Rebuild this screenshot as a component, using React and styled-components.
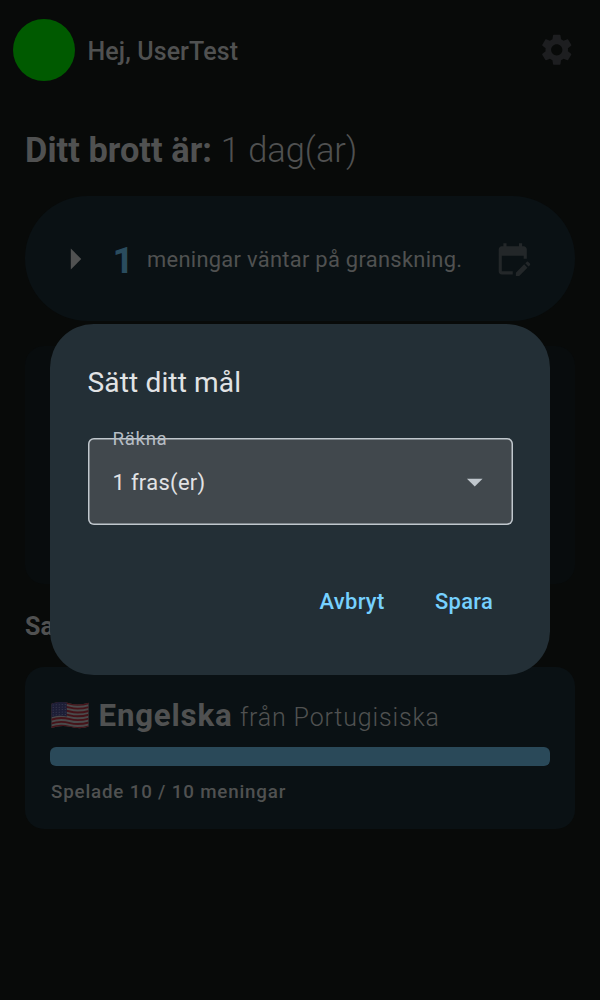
import React from 'react';
import styled, { createGlobalStyle } from 'styled-components';
import { MdSettings, MdEditCalendar, MdArrowRight, MdArrowDropDown } from 'react-icons/md';

const GlobalStyle = createGlobalStyle`
  * { box-sizing: border-box; }
  body { margin: 0; background: #080a09; font-family: Roboto, sans-serif; }
  svg { display: block; flex: none; }
`;

const Screen = styled.div`
  position: relative;
  width: 600px;
  height: 1000px;
  overflow: hidden;
  background: #080a09;
  color: #505151;
`;

const Header = styled.header`
  display: flex;
  align-items: center;
  height: 100px;
  padding: 0 25px 0 12.5px;
`;

const Avatar = styled.div`
  width: 62.5px;
  height: 62.5px;
  margin-right: 12.5px;
  border-radius: 50%;
  background: #005a00;
`;

const Greeting = styled.div`
  flex: 1;
  padding-top: 2px;
  font-size: 25px;
  font-weight: 500;
  line-height: 37px;
  letter-spacing: 0.1px;
`;

const HeaderAction = styled.div`
  color: #1d1e20;
  font-size: 37.5px;
`;

const Content = styled.main`
  padding: 25px 25px 0;
`;

const Streak = styled.h1`
  margin: 0 0 21px;
  font-size: 34.4px;
  font-weight: 700;
  line-height: 50px;
  letter-spacing: 0.03px;
  white-space: nowrap;

  span { font-weight: 300; }
`;

const Card = styled.section`
  background: ${(p) => p.$tone || '#0a1114'};
  border-radius: ${(p) => p.$radius || 19}px;
`;

const ReviewCard = styled(Card)`
  display: flex;
  align-items: center;
  height: 125px;
  padding: 0 44px 0 25px;
`;

const PlayIcon = styled.div`
  font-size: 50px;
`;

const ReviewCount = styled.div`
  width: 34px;
  padding: 2px 0 0 12.5px;
  color: #2a4c5e;
  font-size: 37.5px;
  font-weight: 700;
  line-height: 50px;
`;

const ReviewText = styled.div`
  flex: 1;
  padding-top: 2px;
  margin-left: 13px;
  font-size: 21.9px;
  line-height: 31px;
  letter-spacing: 0.29px;
  white-space: nowrap;
`;

const ReviewIcon = styled.div`
  color: #232729;
  font-size: 37.5px;
`;

const GoalCard = styled(Card)`
  height: 238px;
  margin-top: 25px;
`;

const SectionTitle = styled.h2`
  margin: 25px 0 22px;
  font-size: 25px;
  font-weight: 700;
  line-height: 36px;
`;

const LanguageCard = styled(Card)`
  height: 162px;
  padding: 25px;
`;

const LanguageRow = styled.div`
  display: flex;
  align-items: center;
  height: 48px;
  margin-bottom: 7px;
  padding-left: 1px;
  white-space: nowrap;
`;

const LanguageName = styled.div`
  padding-top: 5px;
  margin-left: 9.5px;
  line-height: 48px;
`;

const Language = styled.span`
  font-size: 31.25px;
  font-weight: 700;
  letter-spacing: 0.8px;
`;

const Source = styled.span`
  margin-left: 7.5px;
  font-size: 25px;
  font-weight: 300;
  letter-spacing: 0.83px;
`;

const Progress = styled.div`
  height: 19px;
  border-radius: 6px;
  background: #2a4959;
`;

const Played = styled.div`
  margin-top: 13px;
  padding-left: 1px;
  font-size: 18.75px;
  font-weight: 500;
  line-height: 27px;
  letter-spacing: 0.82px;
`;

const Overlay = styled.div`
  position: absolute;
  inset: 0;
  display: flex;
  align-items: center;
  justify-content: center;
  padding-bottom: 1px;
`;

const Dialog = styled.div`
  width: 500px;
  height: 351px;
  padding: 37.5px;
  border-radius: 43.75px;
  background: #232f36;
`;

const DialogTitle = styled.h3`
  margin: 0;
  color: #e1e3e5;
  font-size: 28.1px;
  font-weight: 400;
  line-height: 42px;
  letter-spacing: 0.12px;
`;

const Select = styled.div`
  position: relative;
  display: flex;
  align-items: center;
  justify-content: space-between;
  height: 87.5px;
  margin-top: 34px;
  padding: 0 19px 0 25px;
  box-shadow: inset 0 0 0 1.5px #c0c7cd;
  border-radius: 6px;
  background: #41484d;
  color: #e1e3e5;
`;

const SelectValue = styled.span`
  padding-top: 2px;
  font-size: 21.9px;
  letter-spacing: 0.34px;
`;

const SelectLabel = styled.span`
  position: absolute;
  left: 25px;
  top: -11.5px;
  color: #b6bdc4;
  font-size: 18.75px;
  line-height: 26px;
  letter-spacing: 0.625px;
`;

const SelectArrow = styled.div`
  color: #c0c7cd;
  font-size: 37.5px;
`;

const Actions = styled.div`
  display: flex;
  justify-content: flex-end;
  gap: 12.5px;
  margin-top: 45px;
`;

const TextButton = styled.button`
  height: 62.5px;
  padding: 0 19.5px 0 18.5px;
  border: 0;
  background: none;
  color: #76d1ff;
  font: 500 21.9px Roboto, sans-serif;
  letter-spacing: 0.3px;
`;

const FlagIcon = styled.svg`
  margin-bottom: 1px;
`;

function Flag() {
  return (
    <FlagIcon width="38" height="27" viewBox="0 0 38 27">
      <defs>
        <clipPath id="flag">
          <path d="M.5 1.8C7 -.6 13 -.2 19 1.4S31 2.6 37.5 .8V24.6C31 27 25 26.3 19 24.8S7 23.8 .5 26Z" />
        </clipPath>
      </defs>
      <g clipPath="url(#flag)">
        <rect width="38" height="27" fill="#4a4a4b" />
        {[0, 1, 2, 3, 4, 5, 6].map((i) => (
          <path
            key={i}
            d="M0 2C7 -.6 13 -.2 19 1.4S31 2.6 38 .8"
            transform={`translate(0 ${0.4 + i * 3.85})`}
            fill="none"
            stroke="#451319"
            strokeWidth="1.9"
          />
        ))}
        <path d="M0 0H15.8V14.4C10 13.2 5 13.8 0 15.3Z" fill="#1d1e36" />
        {[0, 1, 2, 3, 4].map((r) =>
          [0, 1, 2, 3, 4].map((c) => (
            <circle key={`${r}-${c}`} cx={2.2 + c * 3} cy={3 + r * 2.5 - c * 0.15} r=".5" fill="#44455a" />
          ))
        )}
      </g>
    </FlagIcon>
  );
}

export default function App() {
  return (
    <>
      <GlobalStyle />
      <Screen>
        <Header>
          <Avatar />
          <Greeting>Hej, UserTest</Greeting>
          <HeaderAction><MdSettings /></HeaderAction>
        </Header>
        <Content>
          <Streak>Ditt brott är: <span>1 dag(ar)</span></Streak>
          <ReviewCard $radius={62.5}>
            <PlayIcon><MdArrowRight /></PlayIcon>
            <ReviewCount>1</ReviewCount>
            <ReviewText>meningar väntar på granskning.</ReviewText>
            <ReviewIcon><MdEditCalendar /></ReviewIcon>
          </ReviewCard>
          <GoalCard $tone="#080c0d" />
          <SectionTitle>Samlingar</SectionTitle>
          <LanguageCard>
            <LanguageRow>
              <Flag />
              <LanguageName>
                <Language>Engelska</Language>
                <Source>från Portugisiska</Source>
              </LanguageName>
            </LanguageRow>
            <Progress />
            <Played>Spelade 10 / 10 meningar</Played>
          </LanguageCard>
        </Content>
        <Overlay>
          <Dialog role="dialog">
            <DialogTitle>Sätt ditt mål</DialogTitle>
            <Select>
              <SelectLabel>Räkna</SelectLabel>
              <SelectValue>1 fras(er)</SelectValue>
              <SelectArrow><MdArrowDropDown /></SelectArrow>
            </Select>
            <Actions>
              <TextButton>Avbryt</TextButton>
              <TextButton>Spara</TextButton>
            </Actions>
          </Dialog>
        </Overlay>
      </Screen>
    </>
  );
}
